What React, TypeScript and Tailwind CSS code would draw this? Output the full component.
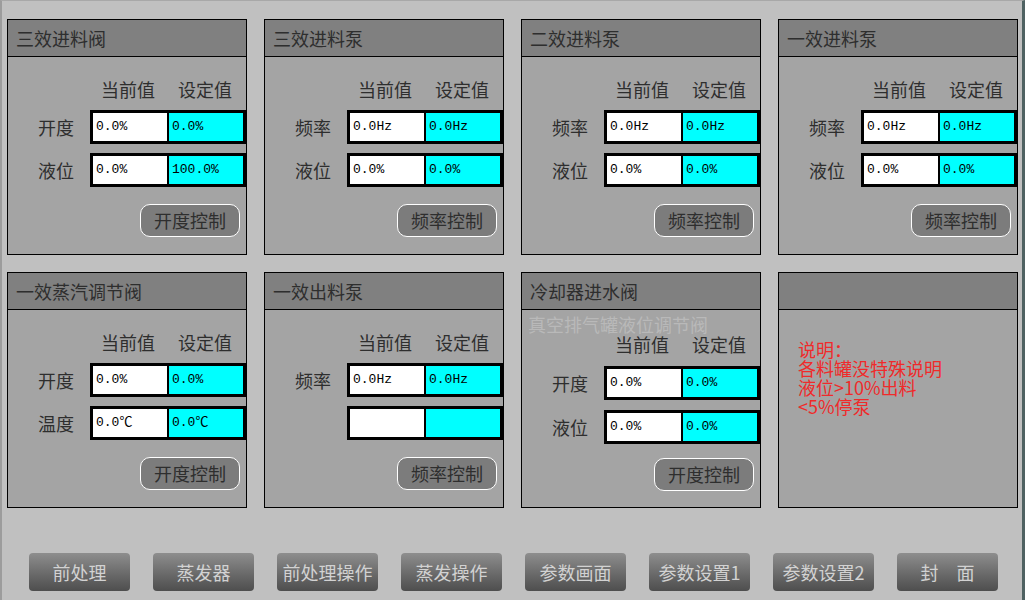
type Row = { label?: string; cur: string; set: string };

type PanelProps = {
  title: string;
  rows?: Row[];
  button?: string;
  ghost?: string;
  note?: string[];
};

const panels: PanelProps[] = [
  {
    title: "三效进料阀",
    rows: [
      { label: "开度", cur: "0.0%", set: "0.0%" },
      { label: "液位", cur: "0.0%", set: "100.0%" },
    ],
    button: "开度控制",
  },
  {
    title: "三效进料泵",
    rows: [
      { label: "频率", cur: "0.0Hz", set: "0.0Hz" },
      { label: "液位", cur: "0.0%", set: "0.0%" },
    ],
    button: "频率控制",
  },
  {
    title: "二效进料泵",
    rows: [
      { label: "频率", cur: "0.0Hz", set: "0.0Hz" },
      { label: "液位", cur: "0.0%", set: "0.0%" },
    ],
    button: "频率控制",
  },
  {
    title: "一效进料泵",
    rows: [
      { label: "频率", cur: "0.0Hz", set: "0.0Hz" },
      { label: "液位", cur: "0.0%", set: "0.0%" },
    ],
    button: "频率控制",
  },
  {
    title: "一效蒸汽调节阀",
    rows: [
      { label: "开度", cur: "0.0%", set: "0.0%" },
      { label: "温度", cur: "0.0℃", set: "0.0℃" },
    ],
    button: "开度控制",
  },
  {
    title: "一效出料泵",
    rows: [
      { label: "频率", cur: "0.0Hz", set: "0.0Hz" },
      { cur: "", set: "" },
    ],
    button: "频率控制",
  },
  {
    title: "冷却器进水阀",
    ghost: "真空排气罐液位调节阀",
    rows: [
      { label: "开度", cur: "0.0%", set: "0.0%" },
      { label: "液位", cur: "0.0%", set: "0.0%" },
    ],
    button: "开度控制",
  },
  {
    title: "",
    note: ["说明：", "各料罐没特殊说明", "液位>10%出料", "<5%停泵"],
  },
];

const navButtons = ["前处理", "蒸发器", "前处理操作", "蒸发操作", "参数画面", "参数设置1", "参数设置2", "封　面"];

function Panel({ title, rows, button, ghost, note }: PanelProps) {
  return (
    <div className="flex h-[236px] w-[240px] flex-col border border-black bg-[#a4a4a4]">
      <div className="flex h-[37px] shrink-0 items-center border-b border-black bg-[#808080] pl-[8px] text-[18px] text-[#2e2e2e]">
        {title}
      </div>
      {note ? (
        <div className="flex flex-col pl-[19px] pt-[30px] text-[18px] leading-[19px] text-[#f02a2a]">
          {note.map((line) => (
            <span key={line}>{line}</span>
          ))}
        </div>
      ) : (
        <div className="relative flex flex-1 flex-col">
          {ghost && (
            <span className="absolute left-[6px] top-[3px] text-[18px] leading-[22px] text-[#b9b9b9]">{ghost}</span>
          )}
          <div
            className={
              ghost
                ? "mt-[22px] grid h-[24px] w-[156px] grid-cols-2 self-end text-center text-[18px] leading-[24px] text-[#2e2e2e]"
                : "mt-[20px] grid h-[24px] w-[156px] grid-cols-2 self-end text-center text-[18px] leading-[24px] text-[#2e2e2e]"
            }
          >
            <span className="pr-[2px]">当前值</span>
            <span className="pr-[4px]">设定值</span>
          </div>
          {rows?.map((row, i) => (
            <div key={i} className={ghost ? "mt-[10px] flex items-center justify-end" : "mt-[9px] flex items-center justify-end"}>
              {row.label && <span className="mr-[16px] text-[18px] text-[#2e2e2e]">{row.label}</span>}
              <div className="flex h-[34px] w-[156px] border-[3px] border-black font-['Liberation_Mono','Noto_Sans_CJK_SC',monospace] text-[13px] text-black">
                <div className="flex w-[74px] items-center bg-white pl-[3px]">{row.cur}</div>
                <div className="flex flex-1 items-center border-l-2 border-black bg-[#00ffff] pl-[3px]">{row.set}</div>
              </div>
            </div>
          ))}
          {button && (
            <div
              className={
                ghost
                  ? "mr-[6px] mt-[14px] flex h-[33px] w-[100px] items-center justify-center self-end rounded-[10px] border border-white bg-[#7c7c7c] text-[18px] text-[#2e2e2e]"
                  : "mr-[6px] mt-[17px] flex h-[33px] w-[100px] items-center justify-center self-end rounded-[10px] border border-white bg-[#7c7c7c] text-[18px] text-[#2e2e2e]"
              }
            >
              {button}
            </div>
          )}
        </div>
      )}
    </div>
  );
}

export default function App() {
  return (
    <div className="h-[600px] w-[1025px] overflow-hidden border-l-2 border-r-[3px] border-t border-l-[#9c9c9c] border-r-[#4f6262] border-t-[#a8a8a8] bg-[#c0c0c0] pl-[5px] pt-[18px] font-['Noto_Sans_CJK_SC',sans-serif]">
      <div className="grid grid-cols-[repeat(4,240px)] gap-[17px]">
        {panels.map((p, i) => (
          <Panel key={i} {...p} />
        ))}
      </div>
      <div className="ml-[22px] mt-[45px] flex gap-[23px]">
        {navButtons.map((b) => (
          <div
            key={b}
            className="flex h-[38px] w-[101px] items-center justify-center rounded-[4px] bg-gradient-to-b from-[#8e8e8e] to-[#4e4e4e] text-[18px] text-[#d2d2d2]"
          >
            {b}
          </div>
        ))}
      </div>
    </div>
  );
}
